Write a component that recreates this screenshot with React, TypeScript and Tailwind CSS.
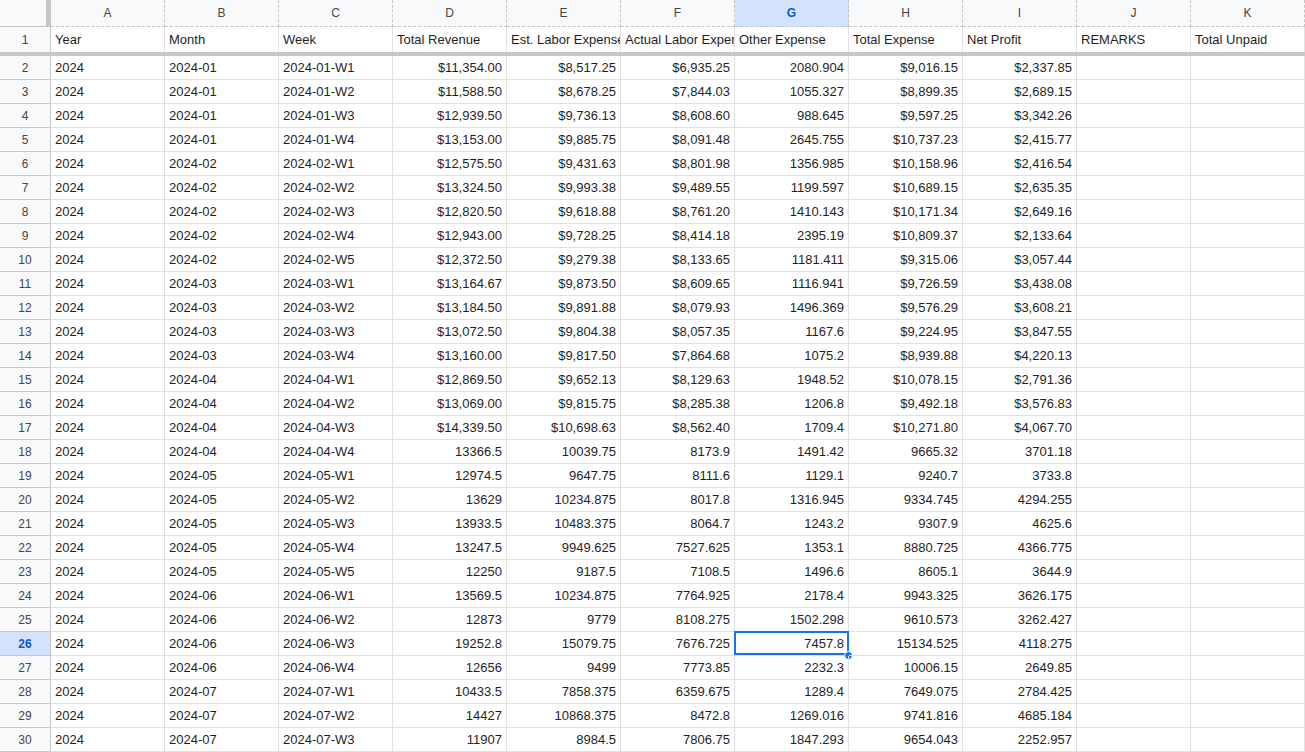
const cols = ['A', 'B', 'C', 'D', 'E', 'F', 'G', 'H', 'I', 'J', 'K']
const head = ['Year', 'Month', 'Week', 'Total Revenue', 'Est. Labor Expense', 'Actual Labor Expense', 'Other Expense', 'Total Expense', 'Net Profit', 'REMARKS', 'Total Unpaid']

const rows: string[][] = [
  ['2024-01-W1', '$11,354.00', '$8,517.25', '$6,935.25', '2080.904', '$9,016.15', '$2,337.85'],
  ['2024-01-W2', '$11,588.50', '$8,678.25', '$7,844.03', '1055.327', '$8,899.35', '$2,689.15'],
  ['2024-01-W3', '$12,939.50', '$9,736.13', '$8,608.60', '988.645', '$9,597.25', '$3,342.26'],
  ['2024-01-W4', '$13,153.00', '$9,885.75', '$8,091.48', '2645.755', '$10,737.23', '$2,415.77'],
  ['2024-02-W1', '$12,575.50', '$9,431.63', '$8,801.98', '1356.985', '$10,158.96', '$2,416.54'],
  ['2024-02-W2', '$13,324.50', '$9,993.38', '$9,489.55', '1199.597', '$10,689.15', '$2,635.35'],
  ['2024-02-W3', '$12,820.50', '$9,618.88', '$8,761.20', '1410.143', '$10,171.34', '$2,649.16'],
  ['2024-02-W4', '$12,943.00', '$9,728.25', '$8,414.18', '2395.19', '$10,809.37', '$2,133.64'],
  ['2024-02-W5', '$12,372.50', '$9,279.38', '$8,133.65', '1181.411', '$9,315.06', '$3,057.44'],
  ['2024-03-W1', '$13,164.67', '$9,873.50', '$8,609.65', '1116.941', '$9,726.59', '$3,438.08'],
  ['2024-03-W2', '$13,184.50', '$9,891.88', '$8,079.93', '1496.369', '$9,576.29', '$3,608.21'],
  ['2024-03-W3', '$13,072.50', '$9,804.38', '$8,057.35', '1167.6', '$9,224.95', '$3,847.55'],
  ['2024-03-W4', '$13,160.00', '$9,817.50', '$7,864.68', '1075.2', '$8,939.88', '$4,220.13'],
  ['2024-04-W1', '$12,869.50', '$9,652.13', '$8,129.63', '1948.52', '$10,078.15', '$2,791.36'],
  ['2024-04-W2', '$13,069.00', '$9,815.75', '$8,285.38', '1206.8', '$9,492.18', '$3,576.83'],
  ['2024-04-W3', '$14,339.50', '$10,698.63', '$8,562.40', '1709.4', '$10,271.80', '$4,067.70'],
  ['2024-04-W4', '13366.5', '10039.75', '8173.9', '1491.42', '9665.32', '3701.18'],
  ['2024-05-W1', '12974.5', '9647.75', '8111.6', '1129.1', '9240.7', '3733.8'],
  ['2024-05-W2', '13629', '10234.875', '8017.8', '1316.945', '9334.745', '4294.255'],
  ['2024-05-W3', '13933.5', '10483.375', '8064.7', '1243.2', '9307.9', '4625.6'],
  ['2024-05-W4', '13247.5', '9949.625', '7527.625', '1353.1', '8880.725', '4366.775'],
  ['2024-05-W5', '12250', '9187.5', '7108.5', '1496.6', '8605.1', '3644.9'],
  ['2024-06-W1', '13569.5', '10234.875', '7764.925', '2178.4', '9943.325', '3626.175'],
  ['2024-06-W2', '12873', '9779', '8108.275', '1502.298', '9610.573', '3262.427'],
  ['2024-06-W3', '19252.8', '15079.75', '7676.725', '7457.8', '15134.525', '4118.275'],
  ['2024-06-W4', '12656', '9499', '7773.85', '2232.3', '10006.15', '2649.85'],
  ['2024-07-W1', '10433.5', '7858.375', '6359.675', '1289.4', '7649.075', '2784.425'],
  ['2024-07-W2', '14427', '10868.375', '8472.8', '1269.016', '9741.816', '4685.184'],
  ['2024-07-W3', '11907', '8984.5', '7806.75', '1847.293', '9654.043', '2252.957'],
]

export default function App() {
  return (
    <div className="h-[752px] w-[1305px] overflow-hidden bg-white text-[13px] text-[#1f1f1f]" style={{ fontFamily: '"Liberation Sans", Arial, sans-serif' }}>
      {/* column letters */}
      <div className="flex h-[27px] bg-[#f8f9fa] text-[12px] text-[#444746]">
        <div className="w-[47px] shrink-0 border-b border-r border-[#c4c7c5]" />
        <div className="w-[4px] shrink-0 bg-[#c4c7c5]" />
        {cols.map(c => (
          <div key={c} className={`flex w-[114px] shrink-0 items-center justify-center border-r border-b border-dashed border-[#c4c7c5] ${c === 'G' ? 'bg-[#d3e3fd] font-bold text-[#0b57d0]' : ''}`}>{c}</div>
        ))}
      </div>
      {/* header row */}
      <div className="flex h-[25px]">
        <div className="flex w-[51px] shrink-0 items-center justify-center border-r border-[#c4c7c5] bg-[#f8f9fa] text-[12px] text-[#444746]">1</div>
        {head.map((h, i) => (
          <div key={i} className="flex w-[114px] shrink-0 items-end overflow-hidden whitespace-nowrap border-r border-[#e1e1e1] px-[4px] pb-[3px]">
            {h}
          </div>
        ))}
      </div>
      <div className="h-[4px] bg-[#c7c7c7]" />
      {rows.map((r, idx) => {
        const n = idx + 2
        const sel = n === 26
        const cells = ['2024', r[0].slice(0, 7), ...r]
        return (
          <div key={n} className="flex h-[24px]">
            <div className={`flex w-[51px] shrink-0 items-center justify-center border-b border-r border-[#c4c7c5] text-[12px] ${sel ? 'bg-[#d3e3fd] font-bold text-[#0b57d0]' : 'bg-[#f8f9fa] text-[#444746]'}`}>{n}</div>
            {cells.map((v, i) => (
              <div key={i} className={`relative flex w-[114px] shrink-0 items-center whitespace-nowrap border-b border-r border-[#e1e1e1] px-[4px] ${i >= 3 ? 'justify-end' : ''}`}>
                <span className="overflow-hidden">{v}</span>
                {sel && i === 6 && (
                  <>
                    <div className="absolute left-[-1px] top-[-1px] h-[24px] w-[115px] shadow-[inset_0_0_0_2px_#1a73e8]" />
                    <div className="absolute bottom-[-5px] right-[-5px] h-[9px] w-[9px] rounded-full border border-white bg-[#1a73e8]" />
                  </>
                )}
              </div>
            ))}
            <div className="w-[114px] shrink-0 border-b border-r border-[#e1e1e1]" />
            <div className="w-[114px] shrink-0 border-b border-r border-[#e1e1e1]" />
          </div>
        )
      })}
    </div>
  )
}
